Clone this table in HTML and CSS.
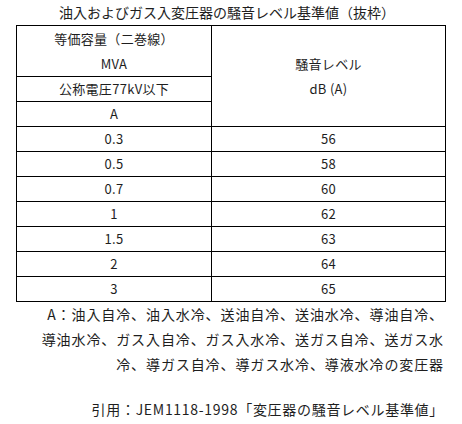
FILE: index.html
```html
<!DOCTYPE html>
<html lang="ja">
<head>
<meta charset="utf-8">
<link rel="stylesheet" href="styles.css">
</head>
<body>
<div class="page">
  <div class="title">油入およびガス入変圧器の騒音レベル基準値（抜枠）</div>
  <table class="noise">
    <tr>
      <td class="c1 head2">等価容量（二巻線）<br>MVA</td>
      <td class="c2" rowspan="3">騒音レベル<br>dB (A)</td>
    </tr>
    <tr><td class="c1">公称電圧77kV以下</td></tr>
    <tr><td class="c1">A</td></tr>
    <tr><td class="c1">0.3</td><td class="c2">56</td></tr>
    <tr><td class="c1">0.5</td><td class="c2">58</td></tr>
    <tr><td class="c1">0.7</td><td class="c2">60</td></tr>
    <tr><td class="c1">1</td><td class="c2">62</td></tr>
    <tr><td class="c1">1.5</td><td class="c2">63</td></tr>
    <tr><td class="c1">2</td><td class="c2">64</td></tr>
    <tr><td class="c1">3</td><td class="c2">65</td></tr>
  </table>
  <p class="note">A：油入自冷、油入水冷、送油自冷、送油水冷、導油自冷、<br>導油水冷、ガス入自冷、ガス入水冷、送ガス自冷、送ガス水<br>冷、導ガス自冷、導ガス水冷、導液水冷の変圧器</p>
  <p class="cite">引用：JEM1118-1998「変圧器の騒音レベル基準値」</p>
</div>
</body>
</html>
```

FILE: styles.css
```css
html, body {
  margin: 0;
  padding: 0;
  background: #ffffff;
}
body {
  font-family: "Noto Sans CJK JP", "Noto Sans", sans-serif;
  color: #1e1e1e;
}
.page {
  width: 462px;
  height: 424px;
  overflow: hidden;
}
.title {
  height: 25px;
  line-height: 25px;
  font-size: 14px;
  text-align: center;
  padding-right: 8px;
}
.noise {
  border-collapse: collapse;
  margin-left: 16px;
  width: 430px;
  table-layout: fixed;
}
.noise td {
  border: 1px solid #000;
  height: 24px;
  padding: 0;
  text-align: center;
  vertical-align: middle;
  font-size: 13px;
  letter-spacing: 0.3px;
  line-height: 24px;
}
.noise .c1 {
  width: 194px;
}
.noise .head2 {
  height: 49px;
  line-height: 25px;
}
.noise td[rowspan] {
  line-height: 25px;
}
.note {
  margin: 0;
  padding-right: 18px;
  text-align: right;
  font-size: 14px;
  letter-spacing: 0.9px;
  line-height: 25px;
}
.cite {
  margin: 20px 0 0;
  padding-right: 18px;
  text-align: right;
  font-size: 14px;
  letter-spacing: 0.7px;
  line-height: 25px;
}
```
